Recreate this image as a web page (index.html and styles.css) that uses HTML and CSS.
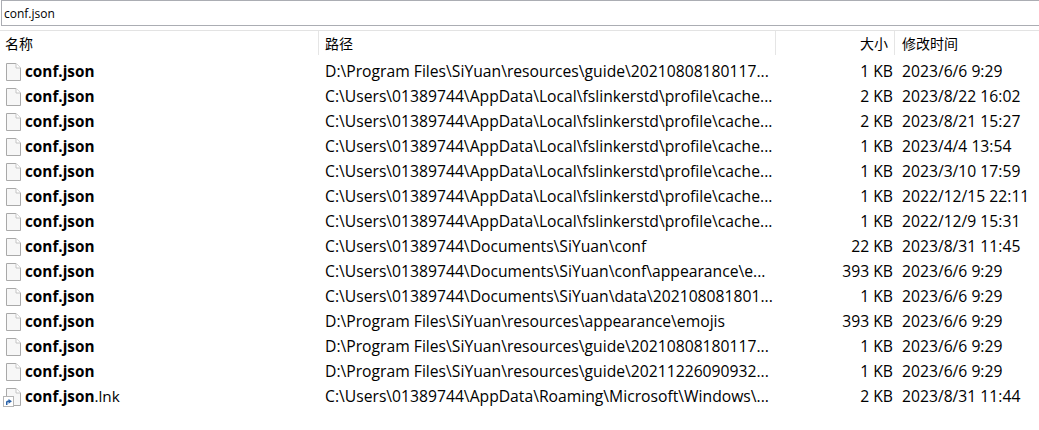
FILE: index.html
```html
<!DOCTYPE html>
<html lang="zh-CN">
<head>
  <meta charset="UTF-8" />
  <title>conf.json - Everything</title>
  <link rel="stylesheet" href="styles.css">
</head>
<body>
  <svg class="defs" width="0" height="0">
    <symbol id="file" viewBox="0 0 15 18">
      <path d="M.5.5h9.5l4.5 4.5v12.500h-14z" fill="#f7f7f7" stroke="#a9a9a9"/>
      <path d="M10 .5v4.500h4.500" fill="#fff" stroke="#c4c4c4"/>
    </symbol>
    <symbol id="link" viewBox="0 0 11 11">
      <rect x=".5" y=".5" width="10" height="10" fill="#fff" stroke="#b5b5b5"/>
      <path d="M3 9V6Q3 4.500 5 4.500H5.500V3L9 5.300 5.500 7.700V6H5Q4.500 6 4.500 7V9z" fill="#2a62a8"/>
    </symbol>
  </svg>

  <div class="search-bar"><input class="search-input" type="text" value="conf.json" /></div>

  <div class="list">
    <div class="list-head">
      <div class="head-cell">名称</div>
      <div class="head-cell">路径</div>
      <div class="head-cell head-size">大小</div>
      <div class="head-cell head-date">修改时间</div>
    </div>

    <div class="row">
      <div class="name"><svg class="icon"><use href="#file"/></svg><span class="label"><b>conf.json</b></span></div>
      <div class="path">D:\Program Files\SiYuan\resources\guide\20210808180117...</div>
      <div class="size">1 KB</div>
      <div class="date">2023/6/6 9:29</div>
    </div>
    <div class="row">
      <div class="name"><svg class="icon"><use href="#file"/></svg><span class="label"><b>conf.json</b></span></div>
      <div class="path">C:\Users\01389744\AppData\Local\fslinkerstd\profile\cache...</div>
      <div class="size">2 KB</div>
      <div class="date">2023/8/22 16:02</div>
    </div>
    <div class="row">
      <div class="name"><svg class="icon"><use href="#file"/></svg><span class="label"><b>conf.json</b></span></div>
      <div class="path">C:\Users\01389744\AppData\Local\fslinkerstd\profile\cache...</div>
      <div class="size">2 KB</div>
      <div class="date">2023/8/21 15:27</div>
    </div>
    <div class="row">
      <div class="name"><svg class="icon"><use href="#file"/></svg><span class="label"><b>conf.json</b></span></div>
      <div class="path">C:\Users\01389744\AppData\Local\fslinkerstd\profile\cache...</div>
      <div class="size">1 KB</div>
      <div class="date">2023/4/4 13:54</div>
    </div>
    <div class="row">
      <div class="name"><svg class="icon"><use href="#file"/></svg><span class="label"><b>conf.json</b></span></div>
      <div class="path">C:\Users\01389744\AppData\Local\fslinkerstd\profile\cache...</div>
      <div class="size">1 KB</div>
      <div class="date">2023/3/10 17:59</div>
    </div>
    <div class="row">
      <div class="name"><svg class="icon"><use href="#file"/></svg><span class="label"><b>conf.json</b></span></div>
      <div class="path">C:\Users\01389744\AppData\Local\fslinkerstd\profile\cache...</div>
      <div class="size">1 KB</div>
      <div class="date">2022/12/15 22:11</div>
    </div>
    <div class="row">
      <div class="name"><svg class="icon"><use href="#file"/></svg><span class="label"><b>conf.json</b></span></div>
      <div class="path">C:\Users\01389744\AppData\Local\fslinkerstd\profile\cache...</div>
      <div class="size">1 KB</div>
      <div class="date">2022/12/9 15:31</div>
    </div>
    <div class="row">
      <div class="name"><svg class="icon"><use href="#file"/></svg><span class="label"><b>conf.json</b></span></div>
      <div class="path">C:\Users\01389744\Documents\SiYuan\conf</div>
      <div class="size">22 KB</div>
      <div class="date">2023/8/31 11:45</div>
    </div>
    <div class="row">
      <div class="name"><svg class="icon"><use href="#file"/></svg><span class="label"><b>conf.json</b></span></div>
      <div class="path">C:\Users\01389744\Documents\SiYuan\conf\appearance\e...</div>
      <div class="size">393 KB</div>
      <div class="date">2023/6/6 9:29</div>
    </div>
    <div class="row">
      <div class="name"><svg class="icon"><use href="#file"/></svg><span class="label"><b>conf.json</b></span></div>
      <div class="path">C:\Users\01389744\Documents\SiYuan\data\202108081801...</div>
      <div class="size">1 KB</div>
      <div class="date">2023/6/6 9:29</div>
    </div>
    <div class="row">
      <div class="name"><svg class="icon"><use href="#file"/></svg><span class="label"><b>conf.json</b></span></div>
      <div class="path">D:\Program Files\SiYuan\resources\appearance\emojis</div>
      <div class="size">393 KB</div>
      <div class="date">2023/6/6 9:29</div>
    </div>
    <div class="row">
      <div class="name"><svg class="icon"><use href="#file"/></svg><span class="label"><b>conf.json</b></span></div>
      <div class="path">D:\Program Files\SiYuan\resources\guide\20210808180117...</div>
      <div class="size">1 KB</div>
      <div class="date">2023/6/6 9:29</div>
    </div>
    <div class="row">
      <div class="name"><svg class="icon"><use href="#file"/></svg><span class="label"><b>conf.json</b></span></div>
      <div class="path">D:\Program Files\SiYuan\resources\guide\20211226090932...</div>
      <div class="size">1 KB</div>
      <div class="date">2023/6/6 9:29</div>
    </div>
    <div class="row">
      <div class="name">
        <span class="icon-wrap"><svg class="icon"><use href="#file"/></svg><svg class="badge"><use href="#link"/></svg></span>
        <span class="label"><b>conf.json</b>.lnk</span>
      </div>
      <div class="path">C:\Users\01389744\AppData\Roaming\Microsoft\Windows\...</div>
      <div class="size">2 KB</div>
      <div class="date">2023/8/31 11:44</div>
    </div>
  </div>
</body>
</html>
```

FILE: styles.css
```css
* {
  box-sizing: border-box;
  margin: 0;
  padding: 0;
}

body {
  width: 1039px;
  height: 430px;
  overflow: hidden;
  background: #fff;
  color: #000;
  font-family: 'Open Sans', 'Noto Sans', 'Noto Sans CJK SC', sans-serif;
  font-size: 15.7px;
}

.defs {
  display: block;
  height: 0;
}

.search-bar {
  height: 31px;
  padding-left: 1px;
  border-bottom: 1px solid #e3e3e3;
}

.search-input {
  display: block;
  width: 100%;
  height: 26px;
  padding: 0 2px;
  border: 1px solid #abadb3;
  border-right: none;
  outline: none;
  color: #000;
  font-family: inherit;
  font-size: 12px;
}

.list-head,
.row {
  display: grid;
  grid-template-columns: 318px 457px 119px 1fr;
}

.list-head {
  height: 28px;
  padding-bottom: 4px;
  font-family: 'Noto Sans CJK SC', sans-serif;
  font-size: 14px;
}

.head-cell {
  display: flex;
  align-items: center;
  padding-left: 6px;
  border-left: 1px solid #e5e5e5;
}

.head-cell:first-child {
  border-left: none;
  padding-left: 5px;
}

.head-size {
  justify-content: flex-end;
  padding-right: 6px;
}

.head-date {
  padding-left: 7px;
}

.row {
  height: 25px;
  align-items: center;
  white-space: nowrap;
}

.name {
  display: flex;
  align-items: center;
  gap: 4px;
  padding-left: 6px;
  font-size: 15.3px;
}

.label,
.path,
.size,
.date {
  padding-bottom: 2px;
}

.name b {
  font-weight: 700;
}

.icon {
  display: block;
  width: 15px;
  height: 18px;
}

.icon-wrap {
  position: relative;
  display: block;
}

.badge {
  position: absolute;
  left: -3px;
  bottom: -1px;
  width: 11px;
  height: 11px;
}

.path {
  padding-left: 7px;
  overflow: hidden;
}

.size {
  padding-right: 1px;
  text-align: right;
}

.date {
  padding-left: 8px;
}
```
